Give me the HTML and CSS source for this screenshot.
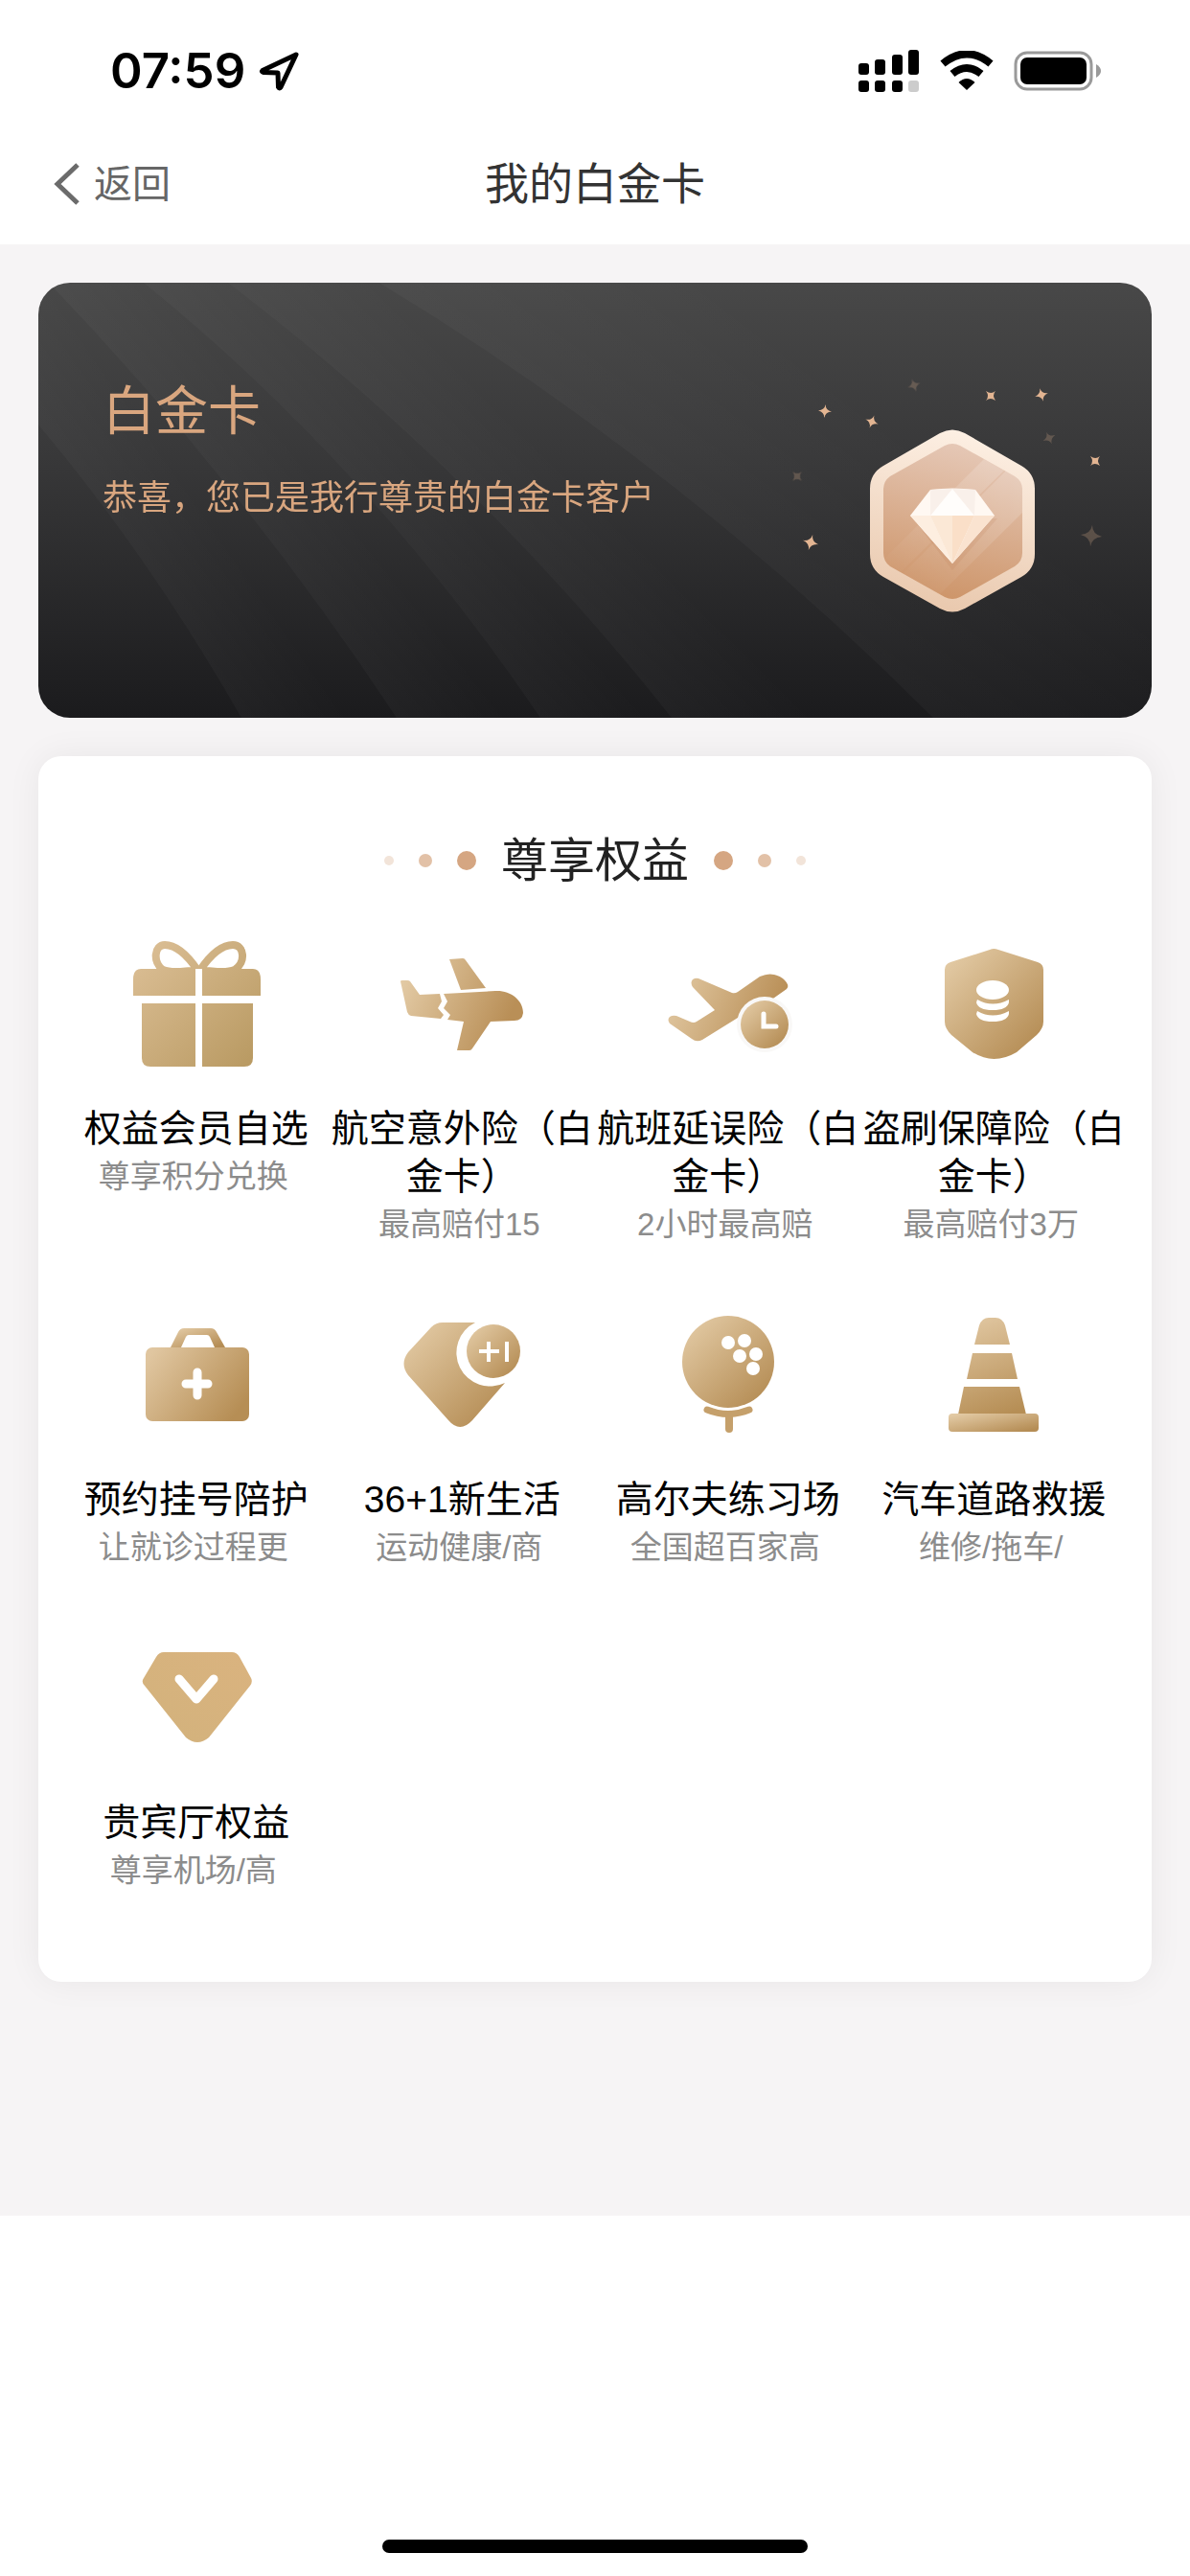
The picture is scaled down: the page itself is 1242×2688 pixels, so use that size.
FILE: index.html
```
<!DOCTYPE html>
<html lang="zh-CN">
<head>
    <meta charset="UTF-8">
    <meta name="viewport" content="width=device-width, initial-scale=1.0">
    <title>我的白金卡</title>
    <link rel="stylesheet" href="styles.css">
</head>
<body>
    <!-- 渐变定义 -->
    <svg class="defs" width="0" height="0" aria-hidden="true">
        <defs>
            <linearGradient id="gold" x1="0.05" y1="0.1" x2="0.85" y2="0.95">
                <stop offset="0" stop-color="#e2c9a3"/>
                <stop offset="1" stop-color="#b58d55"/>
            </linearGradient>
            <linearGradient id="giftGold" gradientUnits="userSpaceOnUse" x1="20" y1="30" x2="140" y2="146">
                <stop offset="0" stop-color="#dabd93"/>
                <stop offset="1" stop-color="#b89961"/>
            </linearGradient>
            <linearGradient id="planeGold" gradientUnits="userSpaceOnUse" x1="18" y1="60" x2="124" y2="106">
                <stop offset="0" stop-color="#e2c9a3"/>
                <stop offset="1" stop-color="#b98f57"/>
            </linearGradient>
            <linearGradient id="caseGold" gradientUnits="userSpaceOnUse" x1="34" y1="56" x2="120" y2="122">
                <stop offset="0" stop-color="#e0c6a0"/>
                <stop offset="1" stop-color="#b68e55"/>
            </linearGradient>
            <linearGradient id="coneGold" gradientUnits="userSpaceOnUse" x1="60" y1="20" x2="96" y2="120">
                <stop offset="0" stop-color="#e0c6a0"/>
                <stop offset="1" stop-color="#b68e55"/>
            </linearGradient>
            <linearGradient id="vipGold" x1="0" y1="1" x2="1" y2="0">
                <stop offset="0" stop-color="#d2b27c"/>
                <stop offset="1" stop-color="#dab37f"/>
            </linearGradient>
        </defs>
    </svg>

    <!-- 状态栏 -->
    <div class="status-bar">
        <div class="status-left">
            <span class="time">07:59</span>
            <svg width="44" height="44" viewBox="0 0 44 44">
                <path d="M39 5 L4 21.500 Q2.500 23 5 23.500 L20 24 L20.500 39 Q21.500 41 23 39 Z" fill="none" stroke="#000" stroke-width="5" stroke-linejoin="round"/>
            </svg>
        </div>
        <div class="status-right">
            <svg width="64" height="46" viewBox="0 0 64 46">
                <rect x="0" y="15" width="11" height="12" rx="3"/>
                <rect x="17" y="11" width="11" height="16" rx="3"/>
                <rect x="35" y="6" width="11" height="21" rx="3"/>
                <rect x="52" y="1" width="11" height="26" rx="3"/>
                <rect x="0" y="33" width="11" height="12" rx="3"/>
                <rect x="17" y="33" width="11" height="12" rx="3"/>
                <rect x="35" y="33" width="11" height="12" rx="3"/>
                <rect x="52" y="33" width="11" height="12" rx="3" fill="#ccc"/>
            </svg>
            <svg width="56" height="42" viewBox="0 0 56 42">
                <path d="M3 13.500 Q28 -7 53 13.500" fill="none" stroke="#000" stroke-width="8"/>
                <path d="M13 24 Q28 12 43 24" fill="none" stroke="#000" stroke-width="8"/>
                <path d="M19.500 33 Q28 25 36.500 33 L28 41 Z"/>
            </svg>
            <svg width="92" height="42" viewBox="0 0 92 42">
                <rect x="2" y="2" width="79" height="38" rx="12" fill="none" stroke="#9a9a9a" stroke-width="3"/>
                <rect x="7" y="7" width="69" height="28" rx="7"/>
                <path d="M86 14 Q91 17 91 21 Q91 25 86 28 Z" fill="#9a9a9a"/>
            </svg>
        </div>
    </div>

    <!-- 导航栏 -->
    <header class="nav">
        <a href="#" class="back">
            <svg width="28" height="46" viewBox="0 0 28 46">
                <path d="M25 3 L4 23 L25 43" fill="none" stroke="#6b6b6b" stroke-width="5"/>
            </svg>
            返回
        </a>
        <h1>我的白金卡</h1>
    </header>

    <main>
        <!-- 白金卡横幅 -->
        <section class="banner">
            <svg class="banner-art" viewBox="0 0 1162 454" preserveAspectRatio="xMaxYMid slice" aria-hidden="true">
                <defs>
                    <linearGradient id="ray1" gradientUnits="userSpaceOnUse" x1="106" y1="301" x2="184" y2="247">
                        <stop offset="0" stop-color="#fff" stop-opacity="0.028"/>
                        <stop offset="1" stop-color="#fff" stop-opacity="0"/>
                    </linearGradient>
                    <linearGradient id="ray2" href="#ray1" x1="192" y1="227" x2="266" y2="168"/>
                    <linearGradient id="ray3" href="#ray1" x1="317" y1="227" x2="384" y2="167"/>
                    <linearGradient id="ray4" href="#ray1" x1="430" y1="227" x2="507" y2="149"/>
                    <linearGradient id="ray5" href="#ray1" x1="645" y1="227" x2="781" y2="53"/>
                    <linearGradient id="rim" x1="0.6" y1="0" x2="0.4" y2="1">
                        <stop offset="0" stop-color="#fdf0e4"/>
                        <stop offset="1" stop-color="#e9c8ad"/>
                    </linearGradient>
                    <linearGradient id="face" x1="0.6" y1="0" x2="0.4" y2="1">
                        <stop offset="0" stop-color="#e6c9b8"/>
                        <stop offset="1" stop-color="#cd9468"/>
                    </linearGradient>
                    <linearGradient id="shine" x1="1" y1="0" x2="0" y2="1">
                        <stop offset="0" stop-color="#fff" stop-opacity="0.2"/>
                        <stop offset="1" stop-color="#fff" stop-opacity="0"/>
                    </linearGradient>
                    <clipPath id="faceClip">
                        <path d="M962 170 L1019 202 Q1027 207 1027 216 V282 Q1027 291 1019 296 L962 328 Q954 332 946 328 L889 296 Q882 291 882 282 V216 Q882 207 889 202 L946 170 Q954 166 962 170 Z"/>
                    </clipPath>
                    <path id="star" d="M0 -7 Q0.500 -1 7 0 Q0.500 1 0 7 Q-0.500 1 -7 0 Q-0.500 -1 0 -7 Z"/>
                </defs>
                <path fill="url(#ray1)" d="M0 148 Q116 286 212 454 H374 Q214 212 11 0 H0 Z"/>
                <path fill="url(#ray2)" d="M11 0 Q214 212 374 454 H524 Q345 190 110 0 Z"/>
                <path fill="url(#ray3)" d="M110 0 Q345 190 524 454 H661 Q460 200 198 0 Z"/>
                <path fill="url(#ray4)" d="M198 0 Q460 200 661 454 H934 Q670 190 356 0 Z"/>
                <path fill="url(#ray5)" d="M356 0 Q670 190 934 454 H1162 V0 Z"/>
                <g fill="#e3b592">
                    <use href="#star" transform="translate(821 134) rotate(5)"/>
                    <use href="#star" transform="translate(870 145) rotate(20)"/>
                    <use href="#star" transform="translate(994 118) rotate(45)"/>
                    <use href="#star" transform="translate(1047 117) rotate(-15)"/>
                    <use href="#star" transform="translate(1103 186) rotate(45)"/>
                    <use href="#star" transform="translate(806 271) rotate(15) scale(1.2)"/>
                </g>
                <g fill="#e3b592" opacity="0.25">
                    <use href="#star" transform="translate(914 107) rotate(-20)"/>
                    <use href="#star" transform="translate(1055 162) rotate(-25)"/>
                    <use href="#star" transform="translate(792 202) rotate(45)"/>
                    <use href="#star" transform="translate(1099 264) rotate(5) scale(1.600)"/>
                </g>
                <path fill="url(#rim)" d="M967 157 L1026 191 Q1040 199 1040 215 V283 Q1040 299 1026 307 L967 340 Q954 347 941 340 L882 307 Q868 299 868 283 V215 Q868 199 882 191 L941 157 Q954 150 967 157 Z"/>
                <g clip-path="url(#faceClip)">
                    <rect x="882" y="166" width="145" height="166" fill="url(#face)"/>
                    <path fill="url(#shine)" d="M987 184 L880 291 L898 304 L1008 196 Z"/>
                    <path fill="url(#shine)" d="M1012 194 L902 304 L940 326 L1027 240 V200 Z"/>
                </g>
                <path fill="#b97b50" opacity="0.15" d="M913 246 L954 300 L1001 246 Z"/>
                <path fill="#fff8f2" d="M931 216 Q954 213 978 216 L998 243 L954 293 L910 243 Z"/>
                <path fill="#fffdfb" d="M954 215 L977 243 H931 Z"/>
                <path fill="#f9f0ea" d="M931 216 L954 215 L931 243 Z M978 216 L954 215 L977 243 Z"/>
                <path fill="#fdeee0" d="M910 243 H931 L954 293 Z"/>
                <path fill="#fbe8d6" d="M931 243 H954 V293 Z"/>
                <path fill="#fadfc8" d="M954 243 H977 L954 293 Z"/>
                <path fill="#fae3d0" d="M977 243 H998 L954 293 Z"/>
            </svg>
            <div class="banner-text">
                <h2>白金卡</h2>
                <p>恭喜，您已是我行尊贵的白金卡客户</p>
            </div>
        </section>

        <!-- 尊享权益 -->
        <section class="rights">
            <div class="rights-title">
                <i class="dot dot-s"></i>
                <i class="dot dot-m"></i>
                <i class="dot dot-l"></i>
                <h2>尊享权益</h2>
                <i class="dot dot-l"></i>
                <i class="dot dot-m"></i>
                <i class="dot dot-s"></i>
            </div>

            <div class="grid">
                <a href="#" class="item">
                    <svg class="icon" viewBox="0 0 160 160">
                        <g fill="none" stroke="url(#giftGold)" stroke-width="8">
                            <path d="M81 44 C70 28 58 18 47 18 C36 18 34 36 45 44 C54 48 68 46 81 44 Z"/>
                            <path d="M84 44 C95 28 107 18 118 18 C130 18 132 36 120 44 C111 48 97 46 84 44 Z"/>
                        </g>
                        <g fill="url(#giftGold)">
                            <path d="M22 43 H79 V71 H14 V54 Q14 43 22 43 Z"/>
                            <path d="M86 43 H139 Q147 43 147 54 V71 H86 Z"/>
                            <path d="M23 79 H79 V145 H32 Q23 145 23 136 Z"/>
                            <path d="M86 79 H139 V136 Q139 145 130 145 H86 Z"/>
                        </g>
                        <path d="M79 43 H86 V71 H79 Z" fill="#fff"/>
                    </svg>
                    <span class="name">权益会员自选</span>
                    <span class="desc">尊享积分兑换</span>
                </a>
                <a href="#" class="item">
                    <svg class="icon" viewBox="0 0 160 160">
                        <g fill="url(#planeGold)">
                            <path d="M16 56 Q16 55 18 55 H23 Q25 55 26 56 L36 70 L57 69 L59 77 L55 84 L61 91 L58 95 L27 92 Q24 91 23 88 Z"/>
                            <path d="M61 69 L115 66 C130 65 144 75 144 89 Q143 97 135 97 L110 98 L91 126 Q90 128 88 128 L75 128 L82 98 L65 96 L68 91 L61 84 L65 77 Z"/>
                            <path d="M67 33 L81 32 Q83 32 84 34 L105 63 L79 65 Z"/>
                        </g>
                    </svg>
                    <span class="name">航空意外险（白金卡）</span>
                    <span class="desc">最高赔付15</span>
                </a>
                <a href="#" class="item">
                    <svg class="icon" viewBox="0 0 160 160">
                        <path fill="url(#planeGold)" d="M49 53 L84 68 Q87 69 90 67 L113 51 Q126 45 137 53 Q145 60 141 64 L124 76 L90 94 L53 117 Q47 120 42 116 L19 100 Q16 96 19 93 Q22 91 26 92 L40 98 Q44 100 47 98 L66 86 L43 62 Q40 57 43 54 Q46 52 49 53 Z"/>
                        <circle cx="118" cy="101" r="29" fill="#f9f8f7"/>
                        <circle cx="118" cy="101" r="25" fill="url(#gold)"/>
                        <path d="M117 90 V103 H130" fill="none" stroke="#fff" stroke-width="5" stroke-linecap="round"/>
                    </svg>
                    <span class="name">航班延误险（白金卡）</span>
                    <span class="desc">2小时最高赔</span>
                </a>
                <a href="#" class="item">
                    <svg class="icon" viewBox="0 0 160 160">
                        <path fill="url(#gold)" d="M76 23 Q80 21 85 23 L126 36 Q132 38 132 44 V98 Q132 105 125 112 L104 130 Q80 144 58 130 L36 112 Q29 105 29 98 V44 Q29 38 35 36 Z"/>
                        <ellipse cx="79" cy="65" rx="17" ry="10" fill="#fff"/>
                        <path fill="#fff" d="M63 75 Q79 84 96 75 V78 Q94 86 79 86 Q64 86 62 78 Z"/>
                        <path fill="#fff" d="M63 87 Q79 96 96 87 V90 Q94 98 79 98 Q64 98 62 90 Z"/>
                    </svg>
                    <span class="name">盗刷保障险（白金卡）</span>
                    <span class="desc">最高赔付3万</span>
                </a>
                <a href="#" class="item">
                    <svg class="icon" viewBox="0 0 160 160">
                        <path fill="url(#gold)" d="M53 51 L61 35 Q63 31 67 31 H95 Q99 31 101 35 L110 51 H99 L94 40 Q93 38 91 38 H72 Q70 38 69 40 L64 51 Z"/>
                        <rect x="27" y="51" width="108" height="77" rx="7" fill="url(#caseGold)"/>
                        <path d="M81 77 V101 M69 89 H92" stroke="#fff" stroke-width="9" stroke-linecap="round"/>
                    </svg>
                    <span class="name">预约挂号陪护</span>
                    <span class="desc">让就诊过程更</span>
                </a>
                <a href="#" class="item">
                    <svg class="icon" viewBox="0 0 160 160">
                        <path fill="url(#gold)" d="M60 25 H94 A35 35 0 0 0 125 88 L91 127 Q78 141 66 127 L24 80 Q15 68 24 56 L48 30 Q53 25 60 25 Z"/>
                        <circle cx="113" cy="55" r="28" fill="url(#gold)"/>
                        <path d="M108 45 V66 M98 55 H119 M127 45 V66" stroke="#fff" stroke-width="4"/>
                    </svg>
                    <span class="name">36+1新生活</span>
                    <span class="desc">运动健康/商</span>
                </a>
                <a href="#" class="item">
                    <svg class="icon" viewBox="0 0 160 160">
                        <circle cx="80" cy="66" r="48" fill="url(#gold)"/>
                        <g fill="#fff">
                            <circle cx="80" cy="46" r="7"/>
                            <circle cx="97" cy="44" r="7"/>
                            <circle cx="92" cy="60" r="7"/>
                            <circle cx="109" cy="58" r="7"/>
                            <circle cx="106" cy="73" r="7"/>
                        </g>
                        <path d="M58 116 Q80 125 102 116" fill="none" stroke="#c5a06b" stroke-width="7" stroke-linecap="round"/>
                        <path d="M81 122 V136" stroke="#c5a06b" stroke-width="8" stroke-linecap="round"/>
                    </svg>
                    <span class="name">高尔夫练习场</span>
                    <span class="desc">全国超百家高</span>
                </a>
                <a href="#" class="item">
                    <svg class="icon" viewBox="0 0 160 160">
                        <g fill="url(#coneGold)">
                            <path d="M60 48 L65 28 Q68 20 75 20 H82 Q89 20 92 28 L97 48 Z"/>
                            <path d="M58 57 H99 L105 84 H52 Z"/>
                            <path d="M49 92 H107 L114 121 H43 Z"/>
                        </g>
                        <rect x="33" y="120" width="94" height="19" rx="4" fill="url(#gold)"/>
                    </svg>
                    <span class="name">汽车道路救援</span>
                    <span class="desc">维修/拖车/</span>
                </a>
                <a href="#" class="item">
                    <svg class="icon" viewBox="0 0 160 160">
                        <path fill="url(#vipGold)" d="M46 32 H117 Q122 32 125 37 L137 59 Q139 63 136 67 L93 121 Q81 131 69 121 L26 67 Q22 63 25 59 L38 37 Q41 32 46 32 Z"/>
                        <path d="M62 60 L80 81 L98 60" fill="none" stroke="#fff" stroke-width="9" stroke-linecap="round" stroke-linejoin="round"/>
                    </svg>
                    <span class="name">贵宾厅权益</span>
                    <span class="desc">尊享机场/高</span>
                </a>
            </div>
        </section>
    </main>

    <div class="home-bar"></div>
</body>
</html>
```
FILE: styles.css
```
* {
    box-sizing: border-box;
}

body {
    margin: 0;
    min-height: 100vh;
    display: flex;
    flex-direction: column;
    font-family: "Liberation Sans", "Noto Sans CJK SC", sans-serif;
    background-color: #fff;
    color: #000;
}

h1, h2, p {
    margin: 0;
    font-weight: normal;
}

a {
    color: inherit;
    text-decoration: none;
}

.defs {
    position: absolute;
}

/* 状态栏 */
.status-bar {
    display: flex;
    justify-content: space-between;
    align-items: center;
    height: 128px;
    padding: 20px 92px 0 115px;
}

.status-left {
    display: flex;
    align-items: center;
    gap: 14px;
}

.time {
    font-family: Inter, sans-serif;
    font-size: 51px;
    font-weight: 600;
    line-height: 60px;
}

.status-right {
    display: flex;
    align-items: center;
    gap: 21px;
}

/* 导航栏 */
.nav {
    position: relative;
    display: flex;
    align-items: center;
    justify-content: center;
    height: 127px;
}

.nav h1 {
    font-size: 46px;
    line-height: 60px;
    color: #333;
}

.back {
    position: absolute;
    left: 56px;
    display: flex;
    align-items: center;
    gap: 14px;
    font-size: 40px;
    line-height: 60px;
    color: #666;
}

main {
    padding: 40px 40px 244px;
    background-color: #f6f4f5;
}

/* 横幅 */
.banner {
    position: relative;
    min-height: 454px;
    padding: 94px 67px;
    border-radius: 33px;
    overflow: hidden;
    background: linear-gradient(to bottom, #484848, #39393a 38%, #1b1b1d);
    color: #d9a67f;
}

.banner-art {
    position: absolute;
    top: 0;
    left: 0;
    width: 100%;
    height: 100%;
}

.banner-text {
    position: relative;
}

.banner h2 {
    font-size: 55px;
    line-height: 80px;
}

.banner p {
    margin-top: 24px;
    font-size: 36px;
    line-height: 54px;
}

/* 权益 */
.rights {
    margin-top: 40px;
    padding: 73px 26px 91px;
    border-radius: 24px;
    background-color: #fff;
    box-shadow: 0 0 36px rgba(0, 0, 0, 0.06);
}

.rights-title {
    display: flex;
    align-items: center;
    justify-content: center;
    gap: 26px;
    margin-bottom: 34px;
}

.rights-title h2 {
    font-size: 49px;
    line-height: 72px;
    color: #222;
}

.dot {
    border-radius: 50%;
    background-color: #d5a682;
}

.dot-s {
    width: 10px;
    height: 10px;
    opacity: 0.3;
}

.dot-m {
    width: 14px;
    height: 14px;
    opacity: 0.7;
}

.dot-l {
    width: 20px;
    height: 20px;
}

.grid {
    display: grid;
    grid-template-columns: repeat(4, 1fr);
    row-gap: 52px;
}

.item {
    display: flex;
    flex-direction: column;
    align-items: center;
    text-align: center;
}

.icon {
    width: 160px;
    height: 160px;
    margin-bottom: 25px;
}

.name {
    font-size: 39px;
    line-height: 50px;
}

.desc {
    padding-right: 6px;
    font-size: 33px;
    line-height: 50px;
    color: #8c8c8c;
}

.home-bar {
    width: 444px;
    height: 14px;
    margin: auto auto 24px;
    border-radius: 7px;
    background-color: #000;
}
```
